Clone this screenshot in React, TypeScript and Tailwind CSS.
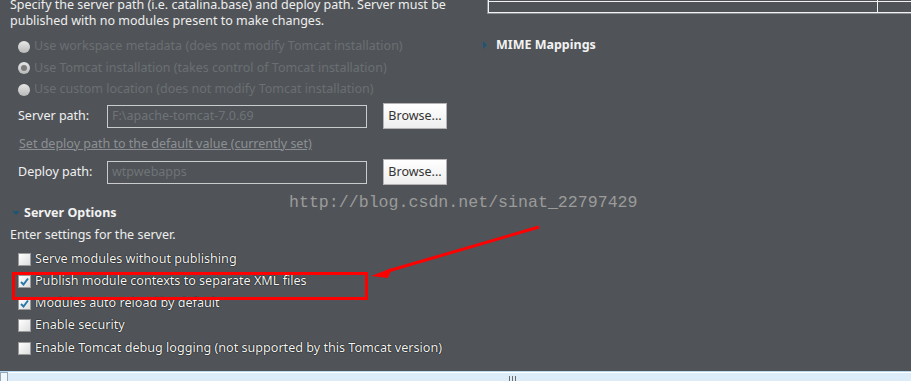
import React from 'react';

const ui = { fontFamily: '"Noto Sans", "Open Sans", sans-serif' };

function Radio({ checked, label }: { checked?: boolean; label: string }) {
  return (
    <div className="flex items-center h-[21.5px]">
      <span className="w-[12px] h-[12px] rounded-full bg-gradient-to-b from-[#e8e8e8] to-[#b8b8b8] flex items-center justify-center">
        {checked && <span className="w-[6px] h-[6px] rounded-full bg-[#7c7c7c]" />}
      </span>
      <span className="ml-[4px] text-[12.5px] text-[#6b6f73]">{label}</span>
    </div>
  );
}

function PathRow({ label, value }: { label: string; value: string }) {
  return (
    <div className="flex items-center h-[26px] pl-[8px]">
      <span className="w-[89px] text-[12.5px] text-[#f0f0f0]">{label}</span>
      <div className="w-[260px] h-[23px] border border-[#c9cbcd] flex items-center px-[4px] text-[12.5px] text-[#6f7377]">
        {value}
      </div>
      <button className="ml-[16px] w-[64px] h-[26px] border border-[#b4b4b4] bg-gradient-to-b from-[#ffffff] to-[#eeeeee] text-[12.5px] text-[#333]">
        Browse...
      </button>
    </div>
  );
}

function Check({ checked, label }: { checked?: boolean; label: string }) {
  return (
    <div className="flex items-center h-[22.25px] pl-[8px]">
      <span className="w-[13px] h-[13px] border border-[#9a9a9a] bg-gradient-to-br from-[#ffffff] to-[#dedede] flex items-center justify-center">
        {checked && (
          <svg width="9" height="9" viewBox="0 0 9 9">
            <path d="M1 5 L3.5 7.5 L8 1.5" fill="none" stroke="#2a78a8" strokeWidth="2" />
          </svg>
        )}
      </span>
      <span
        className="ml-[4px] text-[12.6px] text-[#f6f6f6]"
        style={{ textShadow: '0 0 1px #000, 0 0 1px #000' }}
      >
        {label}
      </span>
    </div>
  );
}

function Triangle({ down }: { down?: boolean }) {
  return down ? (
    <svg width="8" height="6" viewBox="0 0 8 6">
      <path d="M0 1 L8 1 L4 5 Z" fill="#1f5472" />
    </svg>
  ) : (
    <svg width="6" height="8" viewBox="0 0 6 8">
      <path d="M1 0 L5 4 L1 8 Z" fill="#1f5472" />
    </svg>
  );
}

export default function App() {
  return (
    <div className="relative w-[911px] h-[381px] overflow-hidden bg-[#505458] flex flex-col" style={ui}>
      <div className="flex flex-1">
        {/* left column */}
        <div className="w-[480px] pl-[10px] flex flex-col">
          <p className="-mt-[3px] text-[12.5px] leading-[16px] text-[#eeeeee]">
            Specify the server path (i.e. catalina.base) and deploy path. Server must be
            <br />
            published with no modules present to make changes.
          </p>
          <div className="mt-[7px] pl-[8px] flex flex-col">
            <Radio label="Use workspace metadata (does not modify Tomcat installation)" />
            <Radio checked label="Use Tomcat installation (takes control of Tomcat installation)" />
            <Radio label="Use custom location (does not modify Tomcat installation)" />
          </div>
          <div className="mt-[2.5px]">
            <PathRow label="Server path:" value="F:\apache-tomcat-7.0.69" />
          </div>
          <div className="mt-[7px] h-[16px] pl-[9px] flex items-center text-[12.5px] text-[#8c9094] underline">
            Set deploy path to the default value (currently set)
          </div>
          <div className="mt-[7px]">
            <PathRow label="Deploy path:" value="wtpwebapps" />
          </div>
          <div className="mt-[19px] h-[18px] flex items-center pl-[2px]">
            <Triangle down />
            <span className="ml-[4px] text-[12.5px] font-bold text-[#f2f2f2]">Server Options</span>
          </div>
          <div className="mt-[5px] h-[16px] flex items-center text-[12.5px] text-[#eeeeee]">
            Enter settings for the server.
          </div>
          <div className="mt-[5px] flex flex-col">
            <Check label="Serve modules without publishing" />
            <Check checked label="Publish module contexts to separate XML files" />
            <Check checked label="Modules auto reload by default" />
            <Check label="Enable security" />
            <Check label="Enable Tomcat debug logging (not supported by this Tomcat version)" />
          </div>
        </div>

        {/* right column */}
        <div className="flex-1 flex flex-col">
          <div className="ml-[7px] h-[14px] border-l border-b border-[#8d9195]">
            <div className="h-[13px] border-l border-b border-[#f2f2f2] flex">
              <div className="w-[389px] border-r border-[#f2f2f2] flex flex-col">
                <div className="h-[2px] border-b border-[#f2f2f2]" />
              </div>
              <div className="flex-1 flex flex-col">
                <div className="h-[2px] border-b border-[#f2f2f2]" />
              </div>
            </div>
          </div>
          <div className="mt-[22px] h-[18px] flex items-center pl-[2px]">
            <Triangle />
            <span className="ml-[8px] text-[12.5px] font-bold text-[#f2f2f2]">MIME Mappings</span>
          </div>
        </div>
      </div>

      {/* horizontal scrollbar */}
      <div className="h-[10px] border-t border-[#b9d9ee] bg-[#dcedf9] flex items-start">
        <div className="w-[8px] h-[10px] border border-[#8fa9bf] bg-[#f4f8fb]" />
        <div className="flex-1 border-t border-white h-full flex">
          <div className="ml-[501px] mt-[3px] flex gap-[2px]">
            <span className="w-[1px] h-[6px] bg-[#6a6a6a]" />
            <span className="w-[1px] h-[6px] bg-[#6a6a6a]" />
            <span className="w-[1px] h-[6px] bg-[#6a6a6a]" />
          </div>
        </div>
      </div>

      {/* watermark */}
      <div
        className="absolute left-[289px] top-[191px] text-[16.6px] text-[#9b9b9b] pointer-events-none"
        style={{ fontFamily: '"Liberation Mono", monospace' }}
      >
        http://blog.csdn.net/sinat_22797429
      </div>

      {/* red annotation */}
      <div className="absolute left-[12px] top-[272px] w-[356px] h-[28px] border-[3px] border-[#ff0000]" />
      <svg className="absolute left-0 top-0 pointer-events-none" width="911" height="381">
        <line x1="539" y1="227" x2="388" y2="271" stroke="#ff0000" strokeWidth="3" />
        <polygon points="371,276 392,268 388,278" fill="#ff0000" />
      </svg>
    </div>
  );
}
